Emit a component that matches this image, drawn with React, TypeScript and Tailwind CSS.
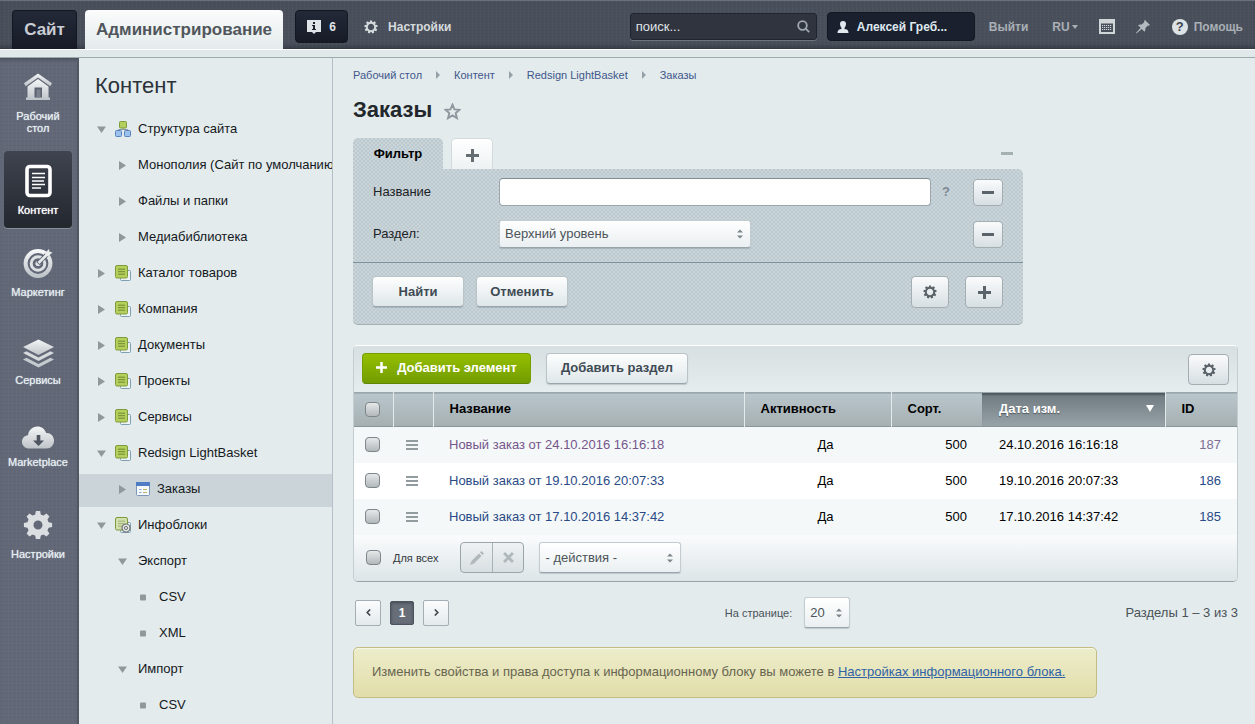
import React from "react";

type IconProps = { className?: string };

const lightBtn =
  "flex items-center justify-center rounded-[4px] border border-[#b9c3c8] border-b-[#98a5aa] bg-linear-to-b from-[#fdfefe] to-[#dfe7ea] text-[13px] font-bold text-[#3f4b54] shadow-[0_1px_1px_rgba(80,100,110,0.25)]";

const squareBtn =
  "flex items-center justify-center rounded-[4px] border border-[#a3adb2] bg-linear-to-b from-[#fafbfc] to-[#d7dfe3] text-[#5a6369]";

const checkbox =
  "block size-[15px] appearance-none rounded-[4px] border border-[#7d868b] bg-linear-to-b from-[#e6e8e9] to-[#b3b8bb] checked:from-[#8d979c] checked:to-[#6c767b]";

const dotted =
  "bg-[#cad5da] bg-[radial-gradient(circle_at_1px_1px,rgba(110,135,145,0.16)_0_0.7px,transparent_0.8px),radial-gradient(circle_at_3px_3px,rgba(110,135,145,0.16)_0_0.7px,transparent_0.8px)] bg-[length:4px_4px]";

function Gear({ className, teeth = 8, hole = 3.4 }: IconProps & { teeth?: number; hole?: number }) {
  return (
    <svg viewBox="0 0 20 20" className={className} aria-hidden="true">
      {Array.from({ length: teeth }, (_, i) => (
        <path key={i} d="M7.800 4.600 8.600.6h2.800l.8 4z" fill="currentColor" transform={`rotate(${(360 / teeth) * i} 10 10)`} />
      ))}
      <circle cx="10" cy="10" r={(hole + 7.2) / 2} fill="none" stroke="currentColor" strokeWidth={7.2 - hole} />
    </svg>
  );
}

function MetalGradient({ id }: { id: string }) {
  return (
    <defs>
      <linearGradient id={id} x1="0" y1="0" x2="0" y2="1">
        <stop offset="0" stopColor="#f4f6f7" />
        <stop offset="1" stopColor="#bfc4c9" />
      </linearGradient>
    </defs>
  );
}

function HomeIcon() {
  return (
    <svg viewBox="0 0 36 36" className="size-9" aria-hidden="true">
      <MetalGradient id="mHome" />
      <path d="M18 4.500 32 14.200 30.300 17.200 18 8.500 5.700 17.200 4 14.200z" fill="url(#mHome)" />
      <path d="M7.500 17.500 18 10l10.500 7.500v11H30V31H6v-2.500h1.500z" fill="url(#mHome)" />
      <path d="M14.500 18.500h7.500v10h-7.500z" fill="#5c626f" />
      <path d="M16.500 20.500h4v8h-4z" fill="#7b818d" />
    </svg>
  );
}

function ContentIcon() {
  return (
    <svg viewBox="0 0 36 36" className="size-9" aria-hidden="true">
      <rect x="7" y="3.500" width="23" height="29" rx="3" fill="none" stroke="#fff" strokeWidth="3.600" />
      <path d="M12 10.500h13M12 14.500h13M12 18h12M12 21.500h13M12 25h9" stroke="#fff" strokeWidth="1.700" />
    </svg>
  );
}

function TargetIcon() {
  return (
    <svg viewBox="0 0 36 36" className="size-9" aria-hidden="true">
      <MetalGradient id="mTarget" />
      <circle cx="18" cy="18.500" r="12.400" fill="none" stroke="url(#mTarget)" strokeWidth="4" />
      <circle cx="18" cy="18.500" r="6.800" fill="none" stroke="#dfe2e5" strokeWidth="3" />
      <circle cx="18" cy="18.500" r="2.600" fill="#dfe2e5" />
      <path d="m18 18.500 10-10" stroke="#5c626f" strokeWidth="4.500" />
      <path d="m18.500 18 9.500-9.500" stroke="#e6e9eb" strokeWidth="2.600" />
      <path d="m25 8 4-4 .5 2.800 3 .7-4.200 3.700-3-.2z" fill="#e9ebed" />
    </svg>
  );
}

function LayersIcon() {
  return (
    <svg viewBox="0 0 36 36" className="size-9" aria-hidden="true">
      <MetalGradient id="mLayers" />
      <path d="m18.500 6.500 15.500 7.500-15.500 8L3 14z" fill="url(#mLayers)" />
      <path d="m3 20 3.500-1.800 12 6.200 12-6.200L34 20l-15.500 8z" fill="#d6dadd" />
      <path d="m3 26.500 3.500-1.800 12 6.200 12-6.200 3.500 1.800-15.500 8z" fill="#c5cace" />
    </svg>
  );
}

function CloudIcon() {
  return (
    <svg viewBox="0 0 36 36" className="size-9" aria-hidden="true">
      <MetalGradient id="mCloud" />
      <path d="M9.500 33.500C5 33.500 2 30.500 2 26.700c0-3.600 2.500-6 6-6.500.5-5 4.500-8.700 9.300-8.700 4.400 0 7.700 2.600 8.900 6.600 4.600-.2 7.800 3.100 7.800 7.400 0 4.600-3 8-7.500 8z" fill="url(#mCloud)" />
      <path d="M16.700 20h3.600v5.500H24L18.500 31 13 25.500h3.700z" fill="#4f5662" />
    </svg>
  );
}

type RailItem = { label: string; icon: React.ReactNode; gap: string; active?: boolean };

const rail: RailItem[] = [
  { label: "Рабочий стол", icon: <HomeIcon />, gap: "pt-[11px]" },
  { label: "Контент", icon: <ContentIcon />, gap: "mt-[5px] pt-3", active: true },
  { label: "Маркетинг", icon: <TargetIcon />, gap: "mt-[5px] pt-3" },
  { label: "Сервисы", icon: <LayersIcon />, gap: "mt-[11px] pt-3" },
  { label: "Marketplace", icon: <CloudIcon />, gap: "mt-[5px] pt-3" },
  { label: "Настройки", icon: <Gear className="m-[3px] size-[30px] text-[#dcdfe2]" hole={3} />, gap: "mt-[15px] pt-3" },
];

function StructureIcon() {
  return (
    <svg viewBox="0 0 16 16" className="size-4 shrink-0" aria-hidden="true">
      <path d="M8 7v2M3.500 9.500V8.500h9v1" stroke="#8a98a0" fill="none" />
      <rect x="4.500" y=".5" width="7" height="6.500" rx="1" fill="#b5cf5e" stroke="#7d9c3a" />
      <rect x=".5" y="9.500" width="6" height="6" rx="1" fill="#9cc1ec" stroke="#5b83bb" />
      <rect x="9.500" y="9.500" width="6" height="6" rx="1" fill="#9cc1ec" stroke="#5b83bb" />
    </svg>
  );
}

function BlockIcon({ gear = false }: { gear?: boolean }) {
  return (
    <svg viewBox="0 0 16 16" className="size-4 shrink-0" aria-hidden="true">
      <rect x="5.500" y="5.500" width="10" height="10" rx="1" fill="#eef4f6" stroke="#7f9fb4" />
      <rect x=".5" y=".5" width="12" height="12.500" rx="1.500" fill={gear ? "#d3dfae" : "#b4cf5b"} stroke="#7e9b3c" />
      <path d="M3 4.200h7M3 6.700h7M3 9.200h7" stroke={gear ? "#9fb276" : "#6e8a30"} />
      {gear && (
        <>
          <circle cx="11" cy="11" r="4" fill="#e6e8e8" stroke="#6d7372" strokeWidth="1.200" />
          <circle cx="11" cy="11" r="1.600" fill="none" stroke="#6d7372" />
        </>
      )}
    </svg>
  );
}

function ListIcon() {
  return (
    <svg viewBox="0 0 14 14" className="size-[14px] shrink-0" aria-hidden="true">
      <rect x=".5" y=".5" width="13" height="13" rx="1" fill="#f5f9fb" stroke="#7f96bb" />
      <path d="M0 0h14v4H0z" fill="#4f7cc4" />
      <path d="M3 7.500h2.500M3 10.500h2.500" stroke="#8fa9d3" />
      <path d="M7 7.500h4M7 10.500h4" stroke="#b9b56c" />
    </svg>
  );
}

type TreeItem = {
  label: string;
  pad: string;
  marker: "open" | "closed" | "leaf";
  icon?: React.ReactNode;
  selected?: boolean;
};

const tree: TreeItem[] = [
  { label: "Структура сайта", pad: "pl-[18px]", marker: "open", icon: <StructureIcon /> },
  { label: "Монополия (Сайт по умолчанию)", pad: "pl-[39px]", marker: "closed" },
  { label: "Файлы и папки", pad: "pl-[39px]", marker: "closed" },
  { label: "Медиабиблиотека", pad: "pl-[39px]", marker: "closed" },
  { label: "Каталог товаров", pad: "pl-[18px]", marker: "closed", icon: <BlockIcon /> },
  { label: "Компания", pad: "pl-[18px]", marker: "closed", icon: <BlockIcon /> },
  { label: "Документы", pad: "pl-[18px]", marker: "closed", icon: <BlockIcon /> },
  { label: "Проекты", pad: "pl-[18px]", marker: "closed", icon: <BlockIcon /> },
  { label: "Сервисы", pad: "pl-[18px]", marker: "closed", icon: <BlockIcon /> },
  { label: "Redsign LightBasket", pad: "pl-[18px]", marker: "open", icon: <BlockIcon /> },
  { label: "Заказы", pad: "pl-[39px]", marker: "closed", icon: <ListIcon />, selected: true },
  { label: "Инфоблоки", pad: "pl-[18px]", marker: "open", icon: <BlockIcon gear /> },
  { label: "Экспорт", pad: "pl-[39px]", marker: "open" },
  { label: "CSV", pad: "pl-[60px]", marker: "leaf" },
  { label: "XML", pad: "pl-[60px]", marker: "leaf" },
  { label: "Импорт", pad: "pl-[39px]", marker: "open" },
  { label: "CSV", pad: "pl-[60px]", marker: "leaf" },
];

function Marker({ kind }: { kind: TreeItem["marker"] }) {
  return (
    <svg viewBox="0 0 9 9" className="mt-[2px] size-[9px] shrink-0" fill="#8f999c" aria-hidden="true">
      {kind === "open" && <path d="M0 1.500h9L4.500 8z" />}
      {kind === "closed" && <path d="M1 0v9l7-4.500z" />}
      {kind === "leaf" && <rect x="1" y="1.500" width="6" height="6" rx="1" />}
    </svg>
  );
}

function Plus({ className }: IconProps) {
  return (
    <svg viewBox="0 0 13 13" className={className} aria-hidden="true">
      <path d="M6.500 0v13M0 6.500h13" stroke="currentColor" strokeWidth="3" />
    </svg>
  );
}

function Minus({ className }: IconProps) {
  return (
    <svg viewBox="0 0 12 3" className={className} aria-hidden="true">
      <path d="M0 0h12v3H0z" fill="currentColor" />
    </svg>
  );
}

function Dropdown({ label, id, options, box, pad }: { label: string; id?: string; options: string[]; box: string; pad: string }) {
  return (
    <div className={`relative ${box}`}>
      <select
        id={id}
        aria-label={label}
        className={`size-full appearance-none rounded-[3px] border border-[#c3cdd1] border-b-[#98a4a9] bg-linear-to-b from-white to-[#eaeff1] text-[13px] text-[#4b545a] shadow-[0_1px_1px_rgba(80,100,110,0.25)] ${pad}`}
      >
        {options.map((o) => (
          <option key={o}>{o}</option>
        ))}
      </select>
      <svg viewBox="0 0 6 10" className="pointer-events-none absolute top-1/2 right-[8px] h-[10px] w-[6px] -translate-y-1/2" fill="#7b868b" aria-hidden="true">
        <path d="M0 3.500 3 .5l3 3zM0 6.500l3 3 3-3z" />
      </svg>
    </div>
  );
}

const crumbs = ["Рабочий стол", "Контент", "Redsign LightBasket", "Заказы"];

const orders = [
  { title: "Новый заказ от 24.10.2016 16:16:18", date: "24.10.2016 16:16:18", id: "187", visited: true },
  { title: "Новый заказ от 19.10.2016 20:07:33", date: "19.10.2016 20:07:33", id: "186", visited: false },
  { title: "Новый заказ от 17.10.2016 14:37:42", date: "17.10.2016 14:37:42", id: "185", visited: false },
];

function Header() {
  return (
    <header className="flex h-[49px] items-start border-t border-t-[#6b7079] bg-[#4a505b] bg-[repeating-linear-gradient(90deg,rgba(255,255,255,0.025)_0_1px,transparent_1px_4px),repeating-linear-gradient(0deg,rgba(0,0,0,0.035)_0_1px,transparent_1px_3px)] pr-3 pl-3 font-bold shadow-[inset_0_-4px_4px_-2px_rgba(20,24,32,0.45)]">
      <a href="#site" className="mt-[9px] flex h-[39px] w-[65px] items-center justify-center rounded-t-[4px] border border-b-0 border-[#141821] bg-linear-to-b from-[#242938] to-[#171b27] text-[17px] text-[#c9cdd3]">
        Сайт
      </a>
      <a href="#admin" className="mt-[9px] ml-2 flex h-[39px] items-center rounded-t-[4px] bg-linear-to-b from-[#fbfcfc] to-[#e4ebec] px-[11px] text-[17px] text-[#50565c]">
        Администрирование
      </a>
      <a href="#notices" className="mt-[9px] ml-3 flex h-[33px] w-[53px] items-center justify-center gap-2 rounded-[4px] border border-[#141821] bg-linear-to-b from-[#242938] to-[#171b27] text-[12px] text-[#dfe4e8]">
        <svg viewBox="0 0 14 14" className="mt-px size-[14px]" aria-hidden="true">
          <path d="M0 0h14v12H9l-2 2-2-2H0z" fill="#dfe4e8" />
          <path d="M6 2h2v2H6zM5 5h3v4h1v1H5V9h1V6H5z" fill="#1c202d" />
        </svg>
        6
      </a>
      <a href="#settings" className="mt-[9px] ml-4 flex h-[33px] items-center gap-[10px] text-[12px] text-[#d5dadd]">
        <Gear className="size-[14px]" teeth={9} hole={4.6} />
        Настройки
      </a>
      <div className="mt-[9px] ml-auto flex h-[33px] items-center text-[12px] text-[#a9afb6]">
        <div className="relative">
          <input
            type="text"
            aria-label="Поиск"
            placeholder="поиск..."
            className="h-[27px] w-[187px] rounded-[3px] border border-[#21252f] bg-[#2f343f] pl-[5px] text-[13px] font-normal text-[#e0e4e7] shadow-[0_1px_0_#6d737d] placeholder:text-[#e0e4e7]"
          />
          <svg viewBox="0 0 13 13" className="absolute top-[7px] right-[7px] size-[13px]" fill="none" stroke="#a2a8af" strokeWidth="1.800" aria-hidden="true">
            <circle cx="5.500" cy="5.500" r="4.300" />
            <path d="m8.700 8.700 3.500 3.500" />
          </svg>
        </div>
        <a href="#profile" className="ml-[10px] flex h-[29px] w-[148px] items-center gap-2 rounded-[4px] border border-[#141821] bg-[#1b202e] pl-[9px] text-[#dfe9ee]">
          <svg viewBox="0 0 12 12" className="size-3" fill="currentColor" aria-hidden="true">
            <path d="M6 0c2 0 3 1.200 3 3S7.800 6.500 7.500 7v1c2.500.3 4 1 4 4H.5c0-3 1.500-3.700 4-4V7C4.200 6.500 3 4.800 3 3s1-3 3-3z" />
          </svg>
          Алексей Греб...
        </a>
        <a href="#logout" className="ml-[14px]">Выйти</a>
        <button type="button" className="ml-6 flex items-center gap-[2px]">
          RU
          <svg viewBox="0 0 6 4" className="h-1 w-[6px]" fill="currentColor" aria-hidden="true"><path d="M0 0h6L3 4z" /></svg>
        </button>
        <button type="button" aria-label="Клавиатура" className="ml-[21px]">
          <svg viewBox="0 0 16 15" className="h-[15px] w-4" aria-hidden="true">
            <path d="M1 1h14v13H1z" fill="none" stroke="#d0d5d8" strokeWidth="2" />
            <path d="M0 0h16v4.500H0z" fill="#d0d5d8" />
            <path d="M3 6.500h10M3 8.500h10M3 10.500h10" stroke="#d0d5d8" strokeDasharray="1.200 .8" />
          </svg>
        </button>
        <button type="button" aria-label="Закрепить" className="ml-[21px]">
          <svg viewBox="0 0 14 14" className="size-[14px]" fill="#b5bbc0" aria-hidden="true">
            <path d="m9 0 5 5-1.200.8-1-.3-2.500 2.700c.3 1.400 0 2.700-.8 3.600L5.700 9 .5 13.500 0 13l4.600-5.200L2 5.200c1-.8 2.300-1 3.700-.6L8.400 2 8 1z" />
          </svg>
        </button>
        <a href="#help" className="ml-[22px] flex items-center gap-[6px]">
          <span className="flex size-4 items-center justify-center rounded-full bg-[#dde2e5] text-[13px] text-[#3d434e]">?</span>
          Помощь
        </a>
      </div>
    </header>
  );
}

function Filter() {
  return (
    <section className="mt-[14px] w-full max-w-[670px]">
      <div className="flex items-end">
        <button type="button" className={`h-[31px] w-[90px] rounded-t-[5px] text-[13px] font-bold text-black ${dotted}`}>
          Фильтр
        </button>
        <button type="button" aria-label="Добавить фильтр" className="ml-2 flex h-[31px] w-[42px] items-center justify-center rounded-t-[5px] border border-b-0 border-[#d3dadd] bg-linear-to-b from-white to-[#eef2f3] pt-[2px] text-[#666e73]">
          <Plus className="size-[13px]" />
        </button>
        <button type="button" aria-label="Свернуть" className="mr-[10px] mb-[14px] ml-auto text-[#a5b0b3]">
          <Minus className="h-[3px] w-3" />
        </button>
      </div>
      <div className={`rounded-b-[5px] rounded-tr-[5px] border-b border-b-[#a3afb5] ${dotted}`}>
        <div className="flex flex-col gap-[14px] px-5 pt-[9px] pb-[14px] text-[13px] text-[#1d2226]">
          <div className="flex h-7 items-center">
            <label htmlFor="f-name" className="w-[126px]">Название</label>
            <input id="f-name" type="text" className="h-7 flex-1 rounded-[4px] border border-[#9aa6ab] border-t-[#7f8c92] bg-white px-2" />
            <span className="w-[30px] text-center font-bold text-[#7d8a92]">?</span>
            <button type="button" aria-label="Убрать поле" className={`ml-3 h-[27px] w-[30px] ${squareBtn}`}>
              <Minus className="h-[3px] w-3" />
            </button>
          </div>
          <div className="flex h-7 items-center">
            <label htmlFor="f-section" className="w-[126px]">Раздел:</label>
            <Dropdown id="f-section" label="Раздел" options={["Верхний уровень"]} box="h-7 w-[252px]" pad="pl-[5px] pr-5" />
            <button type="button" aria-label="Убрать поле" className={`ml-auto h-[27px] w-[30px] ${squareBtn}`}>
              <Minus className="h-[3px] w-3" />
            </button>
          </div>
        </div>
        <div className="flex items-start border-t border-t-[#7f939c] pt-[13px] pr-5 pb-4 pl-[19px]">
          <button type="button" className={`h-[31px] w-[92px] ${lightBtn}`}>Найти</button>
          <button type="button" className={`ml-3 h-[31px] w-[92px] ${lightBtn}`}>Отменить</button>
          <button type="button" aria-label="Настроить фильтр" className={`ml-auto h-8 w-[38px] ${squareBtn}`}>
            <Gear className="size-[14px]" teeth={9} hole={4.6} />
          </button>
          <button type="button" aria-label="Добавить поле" className={`ml-4 h-8 w-[38px] ${squareBtn}`}>
            <Plus className="size-[13px]" />
          </button>
        </div>
      </div>
    </section>
  );
}

function Orders() {
  return (
    <section className="mt-5 overflow-hidden rounded-[5px] border border-[#c4cdd1] border-t-white border-b-[#97a3a8]">
      <div className="flex h-[46px] items-start bg-linear-to-b from-[#d8dfe2] to-[#e6edee] px-2 pt-[7px]">
        <button type="button" className="flex h-[31px] w-[169px] items-center justify-center gap-[10px] rounded-[4px] border border-[#739f00] border-b-[#5f8400] bg-linear-to-b from-[#95bf00] to-[#729c00] pb-[2px] text-[13px] font-bold text-white">
          <Plus className="size-[11px]" />
          Добавить элемент
        </button>
        <button type="button" className={`ml-[15px] h-[31px] w-[142px] pb-[2px] ${lightBtn}`}>Добавить раздел</button>
        <button type="button" aria-label="Настроить список" className={`mt-px ml-auto h-[31px] w-[41px] ${squareBtn}`}>
          <Gear className="size-[14px]" teeth={9} hole={4.6} />
        </button>
      </div>
      <table className="w-full table-fixed border-collapse text-[13px] text-black">
        <colgroup>
          <col className="w-[39px]" />
          <col className="w-10" />
          <col />
          <col className="w-[147px]" />
          <col className="w-[91px]" />
          <col className="w-[183px]" />
          <col className="w-[72px]" />
        </colgroup>
        <thead>
          <tr className="h-[34px] border-t border-b border-t-[#9aa8ad] border-b-[#87949a] bg-linear-to-b from-[#b9c6cb] to-[#a6b0b3]">
            <th className="border-r border-r-[#e3eaec]"><input type="checkbox" aria-label="Выбрать все" className={`ml-[11px] ${checkbox}`} /></th>
            <th className="border-r border-r-[#e3eaec]"></th>
            <th className="border-r border-r-[#e3eaec] pb-[2px] pl-4 text-left font-bold">Название</th>
            <th className="border-r border-r-[#e3eaec] pb-[2px] pl-4 text-left font-bold">Активность</th>
            <th className="pb-[2px] pl-4 text-left font-bold">Сорт.</th>
            <th className="border-r border-r-[#e3eaec] bg-linear-to-b from-[#6f7a80] to-[#98a3a8] pr-[11px] pb-[2px] pl-[17px] text-left font-bold text-white shadow-[inset_0_3px_2px_-1px_#4d575e] text-shadow-[0_1px_1px_#4d575e]">
              <span className="flex items-center justify-between">
                Дата изм.
                <svg viewBox="0 0 8 7" className="h-[7px] w-2" fill="#fff" aria-hidden="true"><path d="M0 0h8L4 7z" /></svg>
              </span>
            </th>
            <th className="pb-[2px] pl-4 text-left font-bold">ID</th>
          </tr>
        </thead>
        <tbody>
          {orders.map((o) => (
            <tr key={o.id} className="h-9 bg-white odd:bg-[#f4f8f9]">
              <td><input type="checkbox" aria-label={o.title} className={`ml-[11px] ${checkbox}`} /></td>
              <td>
                <button type="button" aria-label="Меню" className="ml-[13px] flex w-3 flex-col gap-[2px]">
                  <span className="h-[2px] w-3 bg-[#929c9f]" />
                  <span className="h-[2px] w-3 bg-[#929c9f]" />
                  <span className="h-[2px] w-3 bg-[#929c9f]" />
                </button>
              </td>
              <td className="pl-4"><a href={`#order-${o.id}`} className={o.visited ? "text-[#76568c]" : "text-[#2a4a86]"}>{o.title}</a></td>
              <td className="pl-4 text-center">Да</td>
              <td className="pr-[15px] text-right">500</td>
              <td className="pl-[17px]">{o.date}</td>
              <td className={`pr-4 text-right ${o.visited ? "text-[#7d6f93]" : "text-[#2a4a86]"}`}>{o.id}</td>
            </tr>
          ))}
        </tbody>
      </table>
      <div className="flex h-[46px] items-center bg-linear-to-b from-[#fafbfc] to-[#dde5e8] pl-3 text-[#33393d]">
        <label className="flex items-center gap-3 text-[11px]">
          <input type="checkbox" className={checkbox} />
          Для всех
        </label>
        <div className="ml-[22px] flex h-[31px] w-16 rounded-[4px] border border-[#9ba6ab] bg-linear-to-b from-[#eff2f4] to-[#d8dfe2] text-[#b0b8bc]">
          <button type="button" aria-label="Изменить" className="flex flex-1 items-center justify-center border-r border-r-[#a8b3b7]">
            <svg viewBox="0 0 14 14" className="size-[14px]" fill="currentColor" aria-hidden="true">
              <path d="m0 14 1.500-4L9 2.500 11.500 5 4 12.500zM10 1.500 11.500 0 14 2.500 12.500 4z" />
            </svg>
          </button>
          <button type="button" aria-label="Удалить" className="flex flex-1 items-center justify-center">
            <svg viewBox="0 0 10 10" className="size-[11px]" stroke="currentColor" strokeWidth="2.600" aria-hidden="true">
              <path d="m1 1 8 8M9 1 1 9" />
            </svg>
          </button>
        </div>
        <Dropdown label="Действия" options={["- действия -"]} box="ml-[15px] h-[31px] w-[142px]" pad="pl-[5px] pr-5" />
      </div>
    </section>
  );
}

function Pager() {
  const edge = "flex h-[26px] w-[26px] items-center justify-center rounded-[2px] border border-[#a3afb4] bg-linear-to-b from-[#fbfcfd] to-[#e3eaed] text-[#3f474d]";
  return (
    <div className="mt-4 flex h-8 items-center pb-[2px] pl-[2px] text-[13px] text-[#4a5257]">
      <nav aria-label="Страницы" className="flex flex-1 items-center gap-[9px]">
        <button type="button" aria-label="Назад" className={edge}>
          <svg viewBox="0 0 5 7" className="h-[7px] w-[5px]" fill="none" stroke="currentColor" strokeWidth="1.600" aria-hidden="true"><path d="M4.200.5 1.200 3.500l3 3" /></svg>
        </button>
        <button type="button" aria-current="page" className="h-6 w-6 rounded-[2px] border border-[#4d545d] bg-[#676e78] text-[12px] font-bold text-white shadow-[inset_0_1px_3px_#434a53]">1</button>
        <button type="button" aria-label="Вперёд" className={edge}>
          <svg viewBox="0 0 5 7" className="h-[7px] w-[5px]" fill="none" stroke="currentColor" strokeWidth="1.600" aria-hidden="true"><path d="m.8.500 3 3-3 3" /></svg>
        </button>
      </nav>
      <div className="mr-[18px] flex items-center gap-3">
        <label htmlFor="page-size" className="text-[11px]">На странице:</label>
        <Dropdown id="page-size" label="На странице" options={["20"]} box="h-[31px] w-[46px]" pad="pl-[5px]" />
      </div>
      <span className="flex-1 text-right">Разделы 1 – 3 из 3</span>
    </div>
  );
}

export default function App() {
  return (
    <div className="flex min-h-screen flex-col bg-[#e3ebed] font-['Liberation_Sans',Arial,sans-serif] leading-4">
      <Header />
      <div className="h-[9px] shrink-0 border-t border-b border-t-white border-b-[#9cabae] bg-[#e1e8ea]" />
      <div className="flex flex-1">
        <nav aria-label="Разделы" className="w-[79px] shrink-0 border-r-2 border-r-[#515763] bg-[#626877] bg-[repeating-linear-gradient(90deg,rgba(255,255,255,0.02)_0_1px,transparent_1px_4px),repeating-linear-gradient(0deg,rgba(0,0,0,0.03)_0_1px,transparent_1px_4px)] pr-[5px] pl-1 shadow-[inset_0_4px_4px_-3px_rgba(30,34,44,0.5)]">
          {rail.map((r) => (
            <a
              key={r.label}
              href={`#${r.label}`}
              className={`flex flex-col items-center rounded-[4px] pb-3 text-center text-[11px] leading-3 ${r.gap} ${
                r.active
                  ? "bg-linear-to-b from-[#3f4450] to-[#23272e] text-white shadow-[0_1px_0_#8b919c] text-shadow-[0_0_1px_#ffffff]"
                  : "text-[#e6eef2] text-shadow-[0_0_1px_#dae3e8]"
              }`}
            >
              {r.icon}
              <span className="mt-[5px] px-[6px]">{r.label}</span>
            </a>
          ))}
        </nav>
        <aside className="w-[254px] shrink-0 overflow-hidden border-r border-r-[#b4bfc8]">
          <h2 className="pt-[14px] pl-4 text-[22px] leading-7 text-[#2b3239]">Контент</h2>
          <ul className="mt-[14px]">
            {tree.map((t, i) => (
              <li key={i} className={`mb-[3px] flex h-[33px] items-center pb-1 text-[13px] whitespace-nowrap text-[#15191c] ${t.pad} ${t.selected ? "bg-[#cbd5d9]" : ""}`}>
                <Marker kind={t.marker} />
                <a href={`#node-${i}`} className={`flex items-center ${t.icon ? "ml-[9px] gap-[7px]" : "ml-[11px]"}`}>
                  {t.icon}
                  <span>{t.label}</span>
                </a>
              </li>
            ))}
          </ul>
        </aside>
        <main className="min-w-0 flex-1 pr-[17px] pl-5">
          <nav aria-label="Навигация" className="flex items-center pt-[9px] text-[11px] text-[#40578a]">
            {crumbs.map((c, i) => (
              <React.Fragment key={c}>
                {i > 0 && (
                  <svg viewBox="0 0 4 8" className="mx-[14px] h-2 w-1" fill="#93a0a8" aria-hidden="true"><path d="M0 0v8l4-4z" /></svg>
                )}
                <a href={`#crumb-${i}`}>{c}</a>
              </React.Fragment>
            ))}
          </nav>
          <h1 className="mt-[13px] flex items-center gap-3 text-[22px] leading-7 font-bold text-[#22272c]">
            Заказы
            <svg viewBox="0 0 18 18" className="mt-[3px] size-[17px]" fill="none" stroke="#8d979d" strokeWidth="2" aria-hidden="true">
              <path d="m9 1.800 2.100 5 5.400.4-4.100 3.500 1.300 5.300L9 13.100 4.300 16l1.300-5.300-4.100-3.500 5.400-.4z" />
            </svg>
          </h1>
          <Filter />
          <Orders />
          <Pager />
          <div className="mt-[17px] flex h-[51px] w-fit items-center rounded-[5px] border border-[#c2bc85] bg-linear-to-b from-[#ecedcb] to-[#e2dda9] pr-[31px] pl-[18px] text-[13px] text-[#67644f] shadow-[inset_0_1px_0_#f8f8e6]">
            <p>
              Изменить свойства и права доступа к информационному блоку вы можете в{" "}
              <a href="#iblock" className="text-[#2f62a6] underline">Настройках информационного блока.</a>
            </p>
          </div>
        </main>
      </div>
    </div>
  );
}
